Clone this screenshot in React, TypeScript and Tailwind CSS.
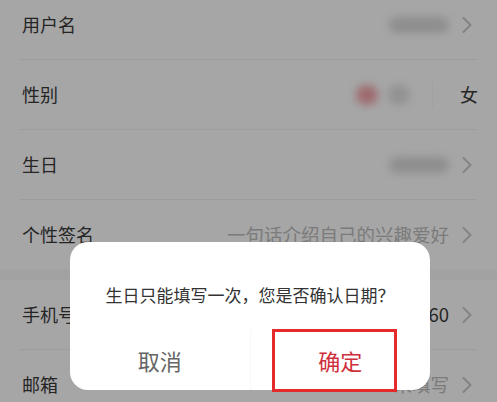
import type { ReactNode } from 'react'

const font = { fontFamily: '"Noto Sans CJK SC", "Noto Sans", sans-serif' }

function Chevron() {
  return (
    <svg width="12" height="18" viewBox="0 0 12 18" className="ml-[12px] shrink-0">
      <path d="M2.5 2 L9.5 9 L2.5 16" fill="none" stroke="#c9c9c9" strokeWidth="2" strokeLinecap="round" strokeLinejoin="round" />
    </svg>
  )
}

function Blob({ className }: { className: string }) {
  return <div className={`rounded-full blur-[4px] ${className}`} />
}

function Row({ label, children, chevron = true }: { label: string; children?: ReactNode; chevron?: boolean }) {
  return (
    <div className={`flex h-[69px] items-center pl-[22px] ${chevron ? 'pr-[24px]' : 'pr-[19px]'}`}>
      <span className="text-[18px] text-[#3a3a3a]">{label}</span>
      <div className="flex flex-1 items-center justify-end">{children}</div>
      {chevron && <Chevron />}
    </div>
  )
}

function Divider() {
  return <div className="mx-[20px] h-px bg-[#f1f1f1]" />
}

export default function App() {
  return (
    <div className="relative h-[402px] w-[497px] overflow-hidden bg-white" style={font}>
      <div className="-mt-[10px]">
        <Row label="用户名">
          <Blob className="h-[16px] w-[60px] bg-[#dadada]" />
        </Row>
        <Divider />
        <Row label="性别" chevron={false}>
          <Blob className="h-[20px] w-[22px] bg-[#f2a3aa]" />
          <Blob className="ml-[10px] h-[20px] w-[22px] bg-[#e0e0e0]" />
          <div className="ml-[22px] h-[26px] w-px bg-[#f8f8f8]" />
          <span className="ml-[27px] text-[18px] text-[#3a3a3a]">女</span>
        </Row>
        <Divider />
        <Row label="生日">
          <Blob className="h-[16px] w-[60px] bg-[#dadada]" />
        </Row>
        <Divider />
        <Row label="个性签名">
          <span className="text-[18.5px] text-[#bdbdbd]">一句话介绍自己的兴趣爱好</span>
        </Row>
        <div className="h-[11px] bg-[#f9f9f9]" />
        <Row label="手机号">
          <span className="text-[18.5px] text-[#3a3a3a]">186****5560</span>
        </Row>
        <Divider />
        <Row label="邮箱">
          <span className="text-[18.5px] text-[#bdbdbd]">未填写</span>
        </Row>
      </div>

      <div className="absolute inset-0 bg-black/35" />

      <div className="absolute left-[70px] top-[242px] w-[360px] rounded-[18px] bg-white">
        <div className="px-4 pt-[42px] pb-[24px] text-center text-[17px] leading-[22px] text-[#333]">
          生日只能填写一次，您是否确认日期？
        </div>
        <div className="flex h-[60px]">
          <button className="flex flex-1 items-center justify-center border-r border-[#f8f8f8] text-[22px] text-[#666]">
            取消
          </button>
          <button className="flex flex-1 items-center justify-center text-[22px] text-[#cf2f3d]">确定</button>
        </div>
        <div className="absolute left-[202px] top-[87px] h-[63px] w-[125px] border-[3.5px] border-[#e42a2a]" />
      </div>
    </div>
  )
}
